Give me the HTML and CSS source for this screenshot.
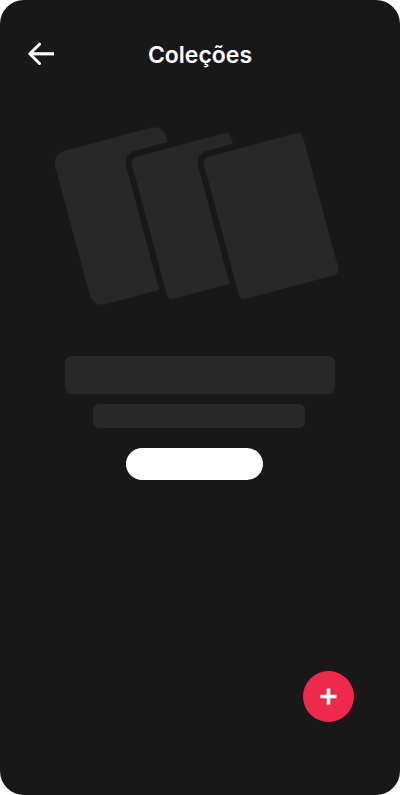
FILE: index.html
```html
<!DOCTYPE html>
<html lang="pt-BR">
<head>
<meta charset="utf-8">
<meta name="viewport" content="width=device-width, initial-scale=1">
<title>Coleções</title>
<link rel="stylesheet" href="styles.css">
</head>
<body>
<div class="screen">
  <header class="header">
    <button class="back" type="button" aria-label="Voltar">
      <svg width="28" height="24" viewBox="0 0 28 24" aria-hidden="true">
        <path d="M11.5 2.2 1.8 11.8l9.7 9.7" fill="none" stroke="currentColor" stroke-width="3" stroke-linecap="round" stroke-linejoin="round"/>
        <path d="M2 11.8H26" stroke="currentColor" stroke-width="3.2"/>
      </svg>
    </button>
    <h1 class="title">Coleções</h1>
  </header>
  <main class="content">
    <svg class="cards" width="286" height="180" viewBox="54 126 286 180" aria-hidden="true">
      <rect class="card" x="70.5" y="136.5" width="115" height="159" rx="13" transform="rotate(-15 128 216)"/>
      <rect class="card card-outlined" x="144.5" y="139.5" width="109" height="153" rx="9" transform="rotate(-15 199 216)"/>
      <rect class="card card-outlined" x="216.5" y="139.5" width="109" height="153" rx="9" transform="rotate(-15 271 216)"/>
    </svg>
    <div class="bar bar-title"></div>
    <div class="bar bar-text"></div>
    <button class="action" type="button" aria-label="Criar coleção"></button>
  </main>
  <button class="add" type="button" aria-label="Adicionar">
    <svg width="17" height="17" viewBox="0 0 17 17" aria-hidden="true">
      <path d="M8.5 0.5v16M0.5 8.5h16" stroke="currentColor" stroke-width="3.6"/>
    </svg>
  </button>
</div>
</body>
</html>
```
FILE: styles.css
```css
* { box-sizing: border-box; }

body {
  margin: 0;
  background: #fff;
  font-family: Inter, "Liberation Sans", sans-serif;
}

button {
  padding: 0;
  border: 0;
  background: none;
  cursor: pointer;
}

.screen {
  display: flex;
  flex-direction: column;
  min-height: 100vh;
  border-radius: 24px;
  background: #181818;
  color: #fff;
}

.header {
  display: grid;
  grid-template-columns: 28px 1fr 28px;
  align-items: end;
  padding: 39px 28px 0;
}

.back {
  display: flex;
  margin-bottom: 5px;
  color: #fff;
}

.title {
  margin: 0;
  font-size: 23px;
  line-height: 32px;
  font-weight: 600;
  text-align: center;
}

.content {
  display: flex;
  flex: 1;
  flex-direction: column;
  align-items: center;
  padding-top: 55px;
}

.cards {
  margin-right: 6px;
  margin-bottom: 50px;
}

.card { fill: #272727; }

.card-outlined {
  stroke: #181818;
  stroke-width: 6px;
}

.bar {
  border-radius: 6px;
  background: #272727;
}

.bar-title {
  width: 270px;
  height: 38px;
  margin-bottom: 10px;
}

.bar-text {
  width: 212px;
  height: 24px;
  margin-right: 2px;
  margin-bottom: 20px;
}

.action {
  width: 137px;
  height: 32px;
  margin-right: 11px;
  border-radius: 16px;
  background: #fff;
}

.add {
  display: flex;
  align-items: center;
  justify-content: center;
  align-self: flex-end;
  width: 51px;
  height: 51px;
  margin: 0 46px 73px 0;
  border-radius: 50%;
  background: #ef294b;
  color: #fff;
}
```
